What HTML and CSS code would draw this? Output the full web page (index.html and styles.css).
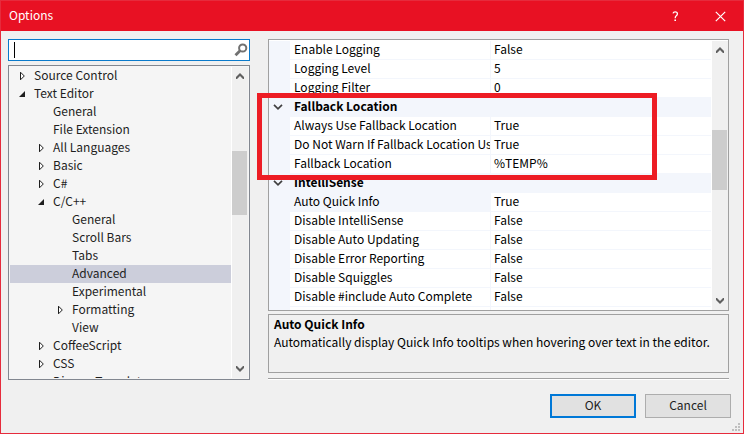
FILE: index.html
```html
<!DOCTYPE html>
<html lang="en">
<head>
<meta charset="utf-8">
<title>Options</title>
<link rel="stylesheet" href="styles.css">
</head>
<body>
<svg class="defs" aria-hidden="true">
  <symbol id="closed" viewBox="0 0 8 10"><path d="M1.5 1.2v7.6L5.3 5z" fill="#fff" stroke="#1e1e1e"/></symbol>
  <symbol id="open" viewBox="0 0 8 10"><path d="M6 2v6H0z" fill="#1e1e1e"/></symbol>
  <symbol id="up" viewBox="0 0 8 6"><path d="M0 4l4-4 4 4v2h-1L4 3 1 6H0z" fill="#606060"/></symbol>
  <symbol id="down" viewBox="0 0 8 6"><path d="M0 2l4 4 4-4V0H7L4 3 1 0H0z" fill="#606060"/></symbol>
  <symbol id="chevron" viewBox="0 0 10 6"><path d="M1 .8l4 4 4-4" fill="none" stroke="#404040" stroke-width="1.7"/></symbol>
</svg>
<div class="dialog">
  <header class="titlebar">
    <h1>Options</h1>
    <button class="caption" aria-label="Help"><svg width="7" height="11" viewBox="0 0 7 11"><path d="M1 2.3Q1.4.8 3.2.8 5.4.8 5.4 2.7 5.4 3.9 4.3 4.7 3.2 5.5 3.2 7.3" fill="none" stroke="#fff" stroke-width="1.3"/><path d="M2.4 8.6H4v1.5H2.4z" fill="#fff"/></svg></button>
    <button class="caption" aria-label="Close"><svg width="11" height="11" viewBox="0 0 11 11"><path d="M.8.8l9.4 9.4M10.2.8L.8 10.2" stroke="#fff" stroke-width="1.2"/></svg></button>
  </header>
  <main class="content">
    <nav class="sidebar">
      <div class="search">
        <span class="caret"></span>
        <input type="text" aria-label="Search Options">
        <svg width="14" height="14" viewBox="0 0 14 14"><circle cx="8.7" cy="5" r="3.6" fill="none" stroke="#717171" stroke-width="2"/><path d="M6 7.8L1.5 12.3" stroke="#717171" stroke-width="2.8"/></svg>
      </div>
      <div class="tree">
        <ul class="nodes">
          <li><svg><use href="#closed"/></svg>Source Control</li>
          <li><svg><use href="#open"/></svg>Text Editor</li>
          <li class="l2"><svg></svg>General</li>
          <li class="l2"><svg></svg>File Extension</li>
          <li class="l2"><svg><use href="#closed"/></svg>All Languages</li>
          <li class="l2"><svg><use href="#closed"/></svg>Basic</li>
          <li class="l2"><svg><use href="#closed"/></svg>C#</li>
          <li class="l2"><svg><use href="#open"/></svg>C/C++</li>
          <li class="l3"><svg></svg>General</li>
          <li class="l3"><svg></svg>Scroll Bars</li>
          <li class="l3"><svg></svg>Tabs</li>
          <li class="l3 selected"><svg></svg>Advanced</li>
          <li class="l3"><svg></svg>Experimental</li>
          <li class="l3"><svg><use href="#closed"/></svg>Formatting</li>
          <li class="l3"><svg></svg>View</li>
          <li class="l2"><svg><use href="#closed"/></svg>CoffeeScript</li>
          <li class="l2"><svg><use href="#closed"/></svg>CSS</li>
          <li class="l2"><svg></svg>Django Templates</li>
        </ul>
        <div class="scrollbar tree-scroll">
          <svg><use href="#up"/></svg>
          <div class="track"><div class="before"></div><div class="thumb"></div><div class="after"></div></div>
          <svg><use href="#down"/></svg>
        </div>
      </div>
    </nav>
    <section class="page">
      <div class="properties">
        <div class="viewport">
          <table>
            <colgroup><col class="gutter"><col class="name"><col></colgroup>
            <tbody>
            <tr><td></td><th scope="row">Enable Logging</th><td>False</td></tr>
            <tr><td></td><th scope="row">Logging Level</th><td>5</td></tr>
            <tr><td></td><th scope="row">Logging Filter</th><td>0</td></tr>
            <tr class="category"><td><svg><use href="#chevron"/></svg></td><th colspan="2">Fallback Location</th></tr>
            <tr><td></td><th scope="row">Always Use Fallback Location</th><td>True</td></tr>
            <tr><td></td><th scope="row">Do Not Warn If Fallback Location Used</th><td>True</td></tr>
            <tr><td></td><th scope="row">Fallback Location</th><td>%TEMP%</td></tr>
            <tr class="category"><td><svg><use href="#chevron"/></svg></td><th colspan="2">IntelliSense</th></tr>
            <tr class="current"><td></td><th scope="row">Auto Quick Info</th><td>True</td></tr>
            <tr><td></td><th scope="row">Disable IntelliSense</th><td>False</td></tr>
            <tr><td></td><th scope="row">Disable Auto Updating</th><td>False</td></tr>
            <tr><td></td><th scope="row">Disable Error Reporting</th><td>False</td></tr>
            <tr><td></td><th scope="row">Disable Squiggles</th><td>False</td></tr>
            <tr><td></td><th scope="row">Disable #include Auto Complete</th><td>False</td></tr>
            <tr><td></td><th></th><td></td></tr>
            </tbody>
          </table>
        </div>
        <div class="scrollbar grid-scroll">
          <svg><use href="#up"/></svg>
          <div class="track"><div class="before"></div><div class="thumb"></div><div class="after"></div></div>
          <svg><use href="#down"/></svg>
        </div>
        <div class="highlight"></div>
      </div>
      <div class="description">
        <h2>Auto Quick Info</h2>
        <p>Automatically display Quick Info tooltips when hovering over text in the editor.</p>
      </div>
      <hr>
    </section>
  </main>
  <footer class="actions">
    <button class="push default">OK</button>
    <button class="push">Cancel</button>
    <svg class="grip" width="8" height="8" viewBox="0 0 8 8"><path d="M6 0h2v2H6zM3 3h2v2H3zM6 3h2v2H6zM0 6h2v2H0zM3 6h2v2H3zM6 6h2v2H6z" fill="#bfbfbf"/></svg>
  </footer>
</div>
</body>
</html>
```
FILE: styles.css
```css
* { box-sizing: border-box; }

body {
  margin: 0;
  font: 12px/18px "Noto Sans CJK KR", sans-serif;
  color: #1e1e1e;
}

button, input { font: inherit; color: inherit; }

.defs { position: absolute; width: 0; height: 0; }

.dialog {
  display: flex;
  flex-direction: column;
  height: 100vh;
  border: 1px solid #e62b3c;
  background: #f0f0f0;
}

.titlebar {
  display: flex;
  align-items: center;
  height: 30px;
  padding-left: 8px;
  background: #e81123;
  color: #fff;
}

.titlebar h1 {
  flex: 1;
  margin: 0;
  padding-bottom: 2px;
  font-size: 12px;
  font-weight: 400;
}

.caption {
  display: flex;
  align-items: center;
  justify-content: center;
  width: 45px;
  height: 30px;
  padding: 0;
  border: 0;
  background: none;
}

.content {
  display: flex;
  flex: 1;
  gap: 18px;
  min-height: 0;
  padding: 8px 14px 0 7px;
}

.sidebar {
  display: flex;
  flex-direction: column;
  gap: 4px;
  width: 242px;
}

.search {
  display: flex;
  align-items: center;
  height: 22px;
  padding: 0 1px 0 5px;
  border: 1px solid #0a7acb;
  background: #fff;
}

.caret { width: 1px; height: 16px; background: #000; }

.search input {
  flex: 1;
  min-width: 0;
  height: 18px;
  padding: 0;
  border: 0;
  outline: 0;
  background: none;
}

.tree {
  display: flex;
  flex: 1;
  min-height: 0;
  padding: 1px;
  border: 1px solid #828790;
  background: #f5f5f5;
}

.nodes {
  flex: 1;
  margin: 0;
  padding: 0;
  overflow: hidden;
  list-style: none;
}

.nodes li {
  display: flex;
  gap: 7px;
  height: 18px;
  padding-left: 9px;
  line-height: 16px;
  white-space: nowrap;
}

.nodes svg { width: 8px; height: 10px; margin-top: 4px; }
.nodes .l2 { padding-left: 28px; }
.nodes .l3 { padding-left: 47px; }
.nodes .selected { background: #cccedb; }

.scrollbar {
  display: flex;
  flex-direction: column;
  align-items: center;
  width: 17px;
  padding: 6px 0;
  border-left: 1px solid #fff;
  background: #f0f0f0;
}

.scrollbar > svg { width: 8px; height: 6px; }

.track {
  display: flex;
  flex: 1;
  flex-direction: column;
  align-self: stretch;
}

.thumb { background: #cdcdcd; margin-right: 1px; }
.tree-scroll .before { flex: 72; }
.tree-scroll .thumb { flex: 64; }
.tree-scroll .after { flex: 151; }
.grid-scroll .before { flex: 77; }
.grid-scroll .thumb { flex: 60; }
.grid-scroll .after { flex: 108; }

.page {
  display: flex;
  flex: 1;
  flex-direction: column;
  min-width: 0;
  color: #000;
}

.properties {
  position: relative;
  display: flex;
  flex: 1;
  min-height: 0;
  padding-top: 1px;
  border: 1px solid #a0a0a0;
  background: #fff;
}

.viewport { flex: 1; min-width: 0; overflow: hidden; }

table {
  width: 100%;
  border-spacing: 0;
  table-layout: fixed;
}

.gutter { width: 21px; }
.name { width: 201px; }

tr { height: 19px; }

th, td {
  height: 19px;
  padding: 0 4px 2px;
  overflow: hidden;
  border-bottom: 1px solid #f3f6fc;
  font-weight: 400;
  line-height: 16px;
  text-align: left;
  white-space: nowrap;
}

td { padding-left: 3px; }
th { border-right: 1px solid #f3f6fc; }

td:first-child, .category th, .current th { background: #f3f6fc; }
td:first-child { padding: 0 4px; }
.category th { font-weight: 700; }
td svg { display: block; width: 10px; height: 6px; }

.highlight {
  position: absolute;
  top: 53px;
  left: -12px;
  width: 400px;
  height: 87px;
  border: 5px solid #ed1c24;
}

.description {
  height: 59px;
  margin-top: 3px;
  padding: 0 5px;
  border: 1px solid #a0a0a0;
}

.description h2, .description p { margin: 0; font-size: 12px; }

hr {
  width: 100%;
  margin: 5px 0 0;
  border: 0;
  border-top: 1px solid #a0a0a0;
  border-bottom: 1px solid #fff;
}

.actions {
  display: flex;
  gap: 9px;
  justify-content: flex-end;
  position: relative;
  padding: 14px 12px 15px;
}

.push {
  width: 86px;
  height: 24px;
  padding: 0 0 2px;
  border: 1px solid #adadad;
  background: #e1e1e1;
  line-height: 16px;
}

.push.default { border: 2px solid #0078d7; }

.grip { position: absolute; right: 3px; bottom: 2px; }
```
